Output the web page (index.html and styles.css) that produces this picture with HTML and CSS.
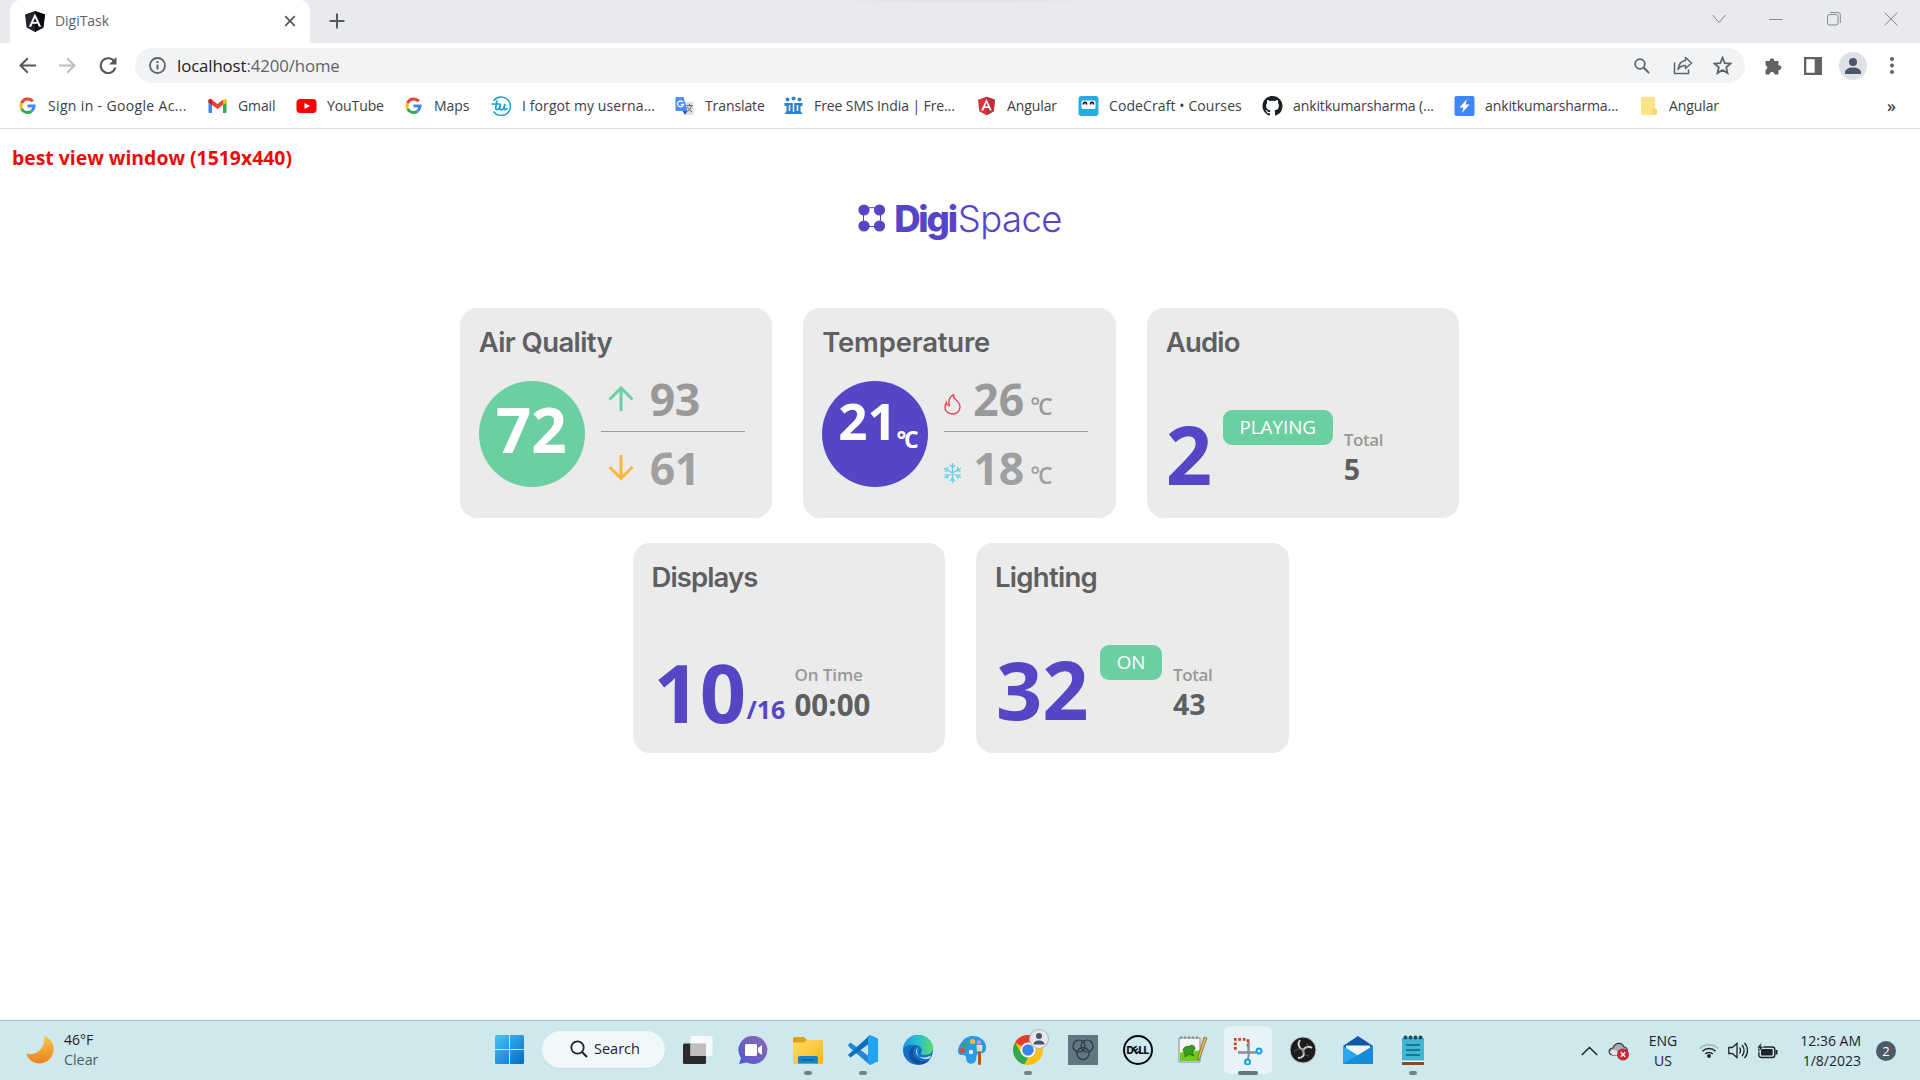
FILE: index.html
```html
<!DOCTYPE html>
<html lang="en">
<head>
<meta charset="utf-8">
<title>DigiTask</title>
<link rel="stylesheet" href="styles.css">
</head>
<body>
<div class="screen">
  <header class="tabstrip">
    <div class="tab">
      <svg class="tab-icon" width="20" height="21" viewBox="0 0 20 21"><path d="M10 0 20 3.5 18.4 16.5 10 21 1.6 16.5 0 3.5z" fill="#20242c"/><path d="M10 0 20 3.5 18.4 16.5 10 21z" fill="#06080d"/><path d="M10 2.5 3.8 15.8h2.4l1.2-3.1h5.2l1.2 3.1h2.4zM10 7l1.8 4H8.200z" fill="#fff"/></svg>
      <span class="tab-title">DigiTask</span>
      <svg width="12" height="12" viewBox="0 0 12 12"><path d="M1.200 1.200 10.800 10.800M10.800 1.200 1.200 10.800" stroke="#55595e" stroke-width="1.800"/></svg>
    </div>
    <svg class="newtab" width="16" height="16" viewBox="0 0 16 16"><path d="M8 .5v15M.5 8h15" stroke="#55595e" stroke-width="2"/></svg>
    <div class="winctl">
      <svg width="14" height="10" viewBox="0 0 14 10"><path d="M.5 1 7 8.500 13.500 1" fill="none" stroke="#85888d"/></svg>
      <svg width="14" height="10" viewBox="0 0 14 10"><path d="M0 5.500h13.500" stroke="#85888d"/></svg>
      <svg width="14" height="14" viewBox="0 0 14 14"><rect x=".5" y="2.500" width="10.500" height="10.500" rx="2" fill="none" stroke="#85888d"/><path d="M3 .5h8a2.300 2.300 0 0 1 2.300 2.300V11" fill="none" stroke="#85888d"/></svg>
      <svg width="14" height="14" viewBox="0 0 14 14"><path d="m.5.5 13 13M13.500.5l-13 13" stroke="#85888d"/></svg>
    </div>
  </header>

  <nav class="toolbar">
    <svg class="back" width="17" height="17" viewBox="0 0 17 17"><path d="M17 8.500H2M8.800 1.300 1.500 8.500l7.300 7.200" fill="none" stroke="#55595e" stroke-width="2"/></svg>
    <svg class="fwd" width="17" height="17" viewBox="0 0 17 17"><path d="M0 8.500h15M8.200 1.300l7.300 7.200-7.300 7.200" fill="none" stroke="#bbbec2" stroke-width="2"/></svg>
    <svg class="reload" width="18" height="18" viewBox="0 0 18 18"><path d="M15.600 5A7.400 7.400 0 1 0 16.300 10.500" fill="none" stroke="#55595e" stroke-width="2.100"/><path d="M17.500 0v7.500H10z" fill="#55595e"/></svg>
    <div class="omnibox">
      <svg width="17" height="17" viewBox="0 0 17 17"><circle cx="8.500" cy="8.500" r="7.500" fill="none" stroke="#5f6368" stroke-width="1.800"/><path d="M8.500 7.500v5M8.500 4v2" stroke="#5f6368" stroke-width="1.900"/></svg>
      <span class="url"><b>localhost</b>:4200/home</span>
      <svg class="ic-search" width="16" height="16" viewBox="0 0 16 16"><circle cx="6" cy="6" r="4.800" fill="none" stroke="#5f6368" stroke-width="1.800"/><path d="m9.500 9.500 5.500 5.500" stroke="#5f6368" stroke-width="2"/></svg>
      <svg class="ic-share" width="20" height="19" viewBox="0 0 20 19"><path d="M1.500 6.500v11h14v-4M12.500 1.500l6 5.500-6 5.500V9.500c-4 0-6 1.500-7.500 4 .5-5 3-8.500 7.500-9z" fill="none" stroke="#5f6368" stroke-width="1.500" stroke-linejoin="round"/></svg>
      <svg width="19" height="19" viewBox="0 0 20 20"><path d="m10 1.800 2.400 5.600 6.100.5-4.600 4 1.400 6-5.300-3.200-5.300 3.200 1.400-6-4.600-4 6.100-.5z" fill="none" stroke="#5f6368" stroke-width="1.900"/></svg>
    </div>
    <svg class="ic-ext" width="18" height="18" viewBox="0 0 18 18"><path d="M1.500 4h4.200a2.300 2.300 0 1 1 4.500 0H14.500v4.200a2.400 2.400 0 1 1 0 4.700V17.500H10.500a2.500 2.500 0 0 0-5 0h-4V13a2.500 2.500 0 0 0 0-4.800z" fill="#5f6368"/></svg>
    <svg class="ic-panel" width="18" height="18" viewBox="0 0 18 18"><path fill-rule="evenodd" d="M0 0h18v18H0zM2.300 2.300v13.400h8.400V2.300z" fill="#5f6368"/></svg>
    <svg class="ic-user" width="28" height="28" viewBox="0 0 28 28"><circle cx="14" cy="14" r="14" fill="#dee1e6"/><circle cx="14" cy="10" r="4" fill="#4a5568"/><path d="M6 22v-1.500c0-3 3.500-5 8-5s8 2 8 5V22z" fill="#4a5568"/></svg>
    <svg width="4" height="17" viewBox="0 0 4 17"><g fill="#5f6368"><circle cx="2" cy="2" r="2"/><circle cx="2" cy="8.500" r="2"/><circle cx="2" cy="15" r="2"/></g></svg>
  </nav>

  <nav class="bookmarks">
    <a class="wide"><svg viewBox="0 0 20 20"><use href="#g"/></svg><span>Sign in - Google Ac...</span></a>
    <a><svg viewBox="0 0 20 20"><path d="M1 3.500 4.500 6v11H2a1 1 0 0 1-1-1z" fill="#4285f4"/><path d="m15.500 6 3.500-2.500V16a1 1 0 0 1-1 1h-2.500z" fill="#34a853"/><path d="M1 5.500C1 3 3 2.500 4.500 3.700L10 8l5.500-4.300v5L10 13 1 6.500z" fill="#ea4335"/><path d="M1 5.500C1 3 3 2.500 4.500 3.700v5L1 6.500z" fill="#c5221f"/><path d="M19 5.500C19 3 17 2.500 15.500 3.700v5L19 6.500z" fill="#fbbc04"/></svg><span>Gmail</span></a>
    <a><svg viewBox="0 0 20 20"><rect y="3" width="20" height="14" rx="3.500" fill="#f00"/><path d="m8 7 5.500 3L8 13z" fill="#fff"/></svg><span>YouTube</span></a>
    <a><svg viewBox="0 0 20 20"><use href="#g"/></svg><span>Maps</span></a>
    <a class="mid"><svg viewBox="0 0 20 20"><path d="M2 5a9.300 9.300 0 1 1 0 10.500" fill="none" stroke="#1da1c9" stroke-width="1.400"/><path d="M0 8h9M5.500 4.500 4.200 12c-.2 2 2.300 2.300 3.500.3L9 8l-.8 4c0 2.500 3 2.300 4 0l1.300-4-1 4.500c0 1.500 2 1.500 3.500-.5" fill="none" stroke="#1da1c9" stroke-width="1.700"/></svg><span>I forgot my userna...</span></a>
    <a><svg viewBox="0 0 20 20"><path d="M9 6h9a1 1 0 0 1 1 1v11a1 1 0 0 1-1 1h-6z" fill="#dcdfe3"/><path d="M2 1h7l4 14H2a1 1 0 0 1-1-1V2a1 1 0 0 1 1-1z" fill="#4d8bf5"/><path d="m8 15 5 0-2.500 4z" fill="#3558b8"/><path d="M8.500 6A3 3 0 1 0 9 8.500H6.300" fill="none" stroke="#fff" stroke-width="1.300"/><path d="M12 9.500h6M15 8v1.500M17 9.500c-.5 3-2 4.500-4 6M13 11c1 2.500 3 4 4.500 5" fill="none" stroke="#667" /></svg><span>Translate</span></a>
    <a><svg viewBox="0 0 20 20"><path d="M1 7h18v3h-2v5l2 3H1l2-3v-5H1z" fill="#2f80cf"/><path d="M6 9v6M10 7v9M14 9v6" stroke="#e8f4ff" stroke-width="1.500"/><g fill="#2f80cf"><circle cx="4" cy="3.500" r="2"/><circle cx="10" cy="2.500" r="2"/><circle cx="16" cy="3.500" r="2"/></g></svg><span>Free SMS India | Fre...</span></a>
    <a><svg viewBox="0 0 20 20"><path d="m10 .8 8.500 3-1.300 11.400L10 19.200l-7.200-4L1.500 3.800z" fill="#dd3340"/><path d="m10 .8 8.500 3-1.300 11.400L10 19.200z" fill="#b7303b"/><path d="M10 3 4.700 14.500h2.100l1-2.600h4.400l1 2.600h2.100zm0 3.800 1.500 3.500h-3z" fill="#fff"/></svg><span>Angular</span></a>
    <a class="mid"><svg viewBox="0 0 20 20"><rect width="20" height="20" rx="3" fill="#29abe2"/><rect x="3" y="4.500" width="14" height="8.500" rx="1.500" fill="#fff"/><path d="M5 8.500c0-3 3-3 3 0M12 8.500c0-3 3-3 3 0" stroke="#111" stroke-width="1.700" fill="none"/></svg><span>CodeCraft • Courses</span></a>
    <a><svg viewBox="0 0 16 16"><path fill="#1b1f23" d="M8 0C3.580 0 0 3.580 0 8c0 3.540 2.290 6.530 5.470 7.590.4.070.55-.17.55-.38 0-.19-.01-.82-.01-1.490-2.010.37-2.530-.49-2.690-.94-.09-.23-.48-.94-.82-1.130-.28-.15-.68-.52-.01-.53.63-.01 1.080.58 1.230.82.72 1.210 1.870.87 2.330.66.070-.52.28-.87.51-1.070-1.780-.2-3.640-.89-3.640-3.950 0-.87.31-1.590.82-2.150-.08-.2-.36-1.020.08-2.120 0 0 .67-.21 2.200.82.64-.18 1.320-.27 2-.27s1.360.09 2 .27c1.530-1.040 2.200-.82 2.200-.82.44 1.100.16 1.920.08 2.120.51.56.82 1.270.82 2.150 0 3.070-1.870 3.750-3.650 3.950.29.25.54.73.54 1.480 0 1.070-.01 1.930-.01 2.200 0 .21.15.46.55.38A8.010 8.010 0 0 0 16 8c0-4.420-3.580-8-8-8z"/></svg><span>ankitkumarsharma (...</span></a>
    <a><svg viewBox="0 0 20 20"><rect width="20" height="20" rx="2" fill="#4285f4"/><path d="M12.500 3 5 11.500h4L7.500 17 15 8.500h-4z" fill="#fff"/></svg><span>ankitkumarsharma...</span></a>
    <a><svg viewBox="0 0 20 20"><rect x="2.500" y="1" width="14" height="18" rx="1.500" fill="#fde488"/><path d="M14 12.500h2.500a2 2 0 0 1 2 2V17a2 2 0 0 1-2 2h-2.500z" fill="#f7d862"/></svg><span>Angular</span></a>
    <b class="more">»</b>
  </nav>

  <main class="page">
    <p class="notice">best view window (1519x440)</p>
    <div class="logo">
      <svg width="28" height="28" viewBox="0 0 28 28"><path d="M5.500 5.500C10 3 18 3 22.500 5.500v17H5.500z" fill="none" stroke="#5546c6" stroke-width="1"/><g fill="#5546c6"><circle cx="6" cy="6" r="5.600"/><circle cx="21.500" cy="6" r="5.600"/><circle cx="6" cy="22" r="5.600"/><circle cx="21.500" cy="22" r="5.600"/></g></svg>
      <span class="logo-a">Digi</span><span class="logo-b">Space</span>
    </div>
    <section class="row first">
      <article class="card">
        <h2 class="t-air">Air Quality</h2>
        <div class="gauge">
          <div class="dial green"><span class="dial-num">72</span></div>
          <div class="reads">
            <div class="read"><svg width="26" height="26" viewBox="0 0 26 26"><path d="M13 25V2M1.500 13.500 13 2l11.500 11.500" fill="none" stroke="#6bcfa2" stroke-width="3"/></svg><span>93</span></div>
            <div class="read low"><svg width="26" height="26" viewBox="0 0 26 26"><path d="M13 0v23M1.500 12 13 23.500 24.500 12" fill="none" stroke="#fbb73c" stroke-width="3"/></svg><span>61</span></div>
          </div>
        </div>
      </article>
      <article class="card">
        <h2 class="t-temp">Temperature</h2>
        <div class="gauge">
          <div class="dial violet"><span class="dial-temp">21</span><span class="deg">°C</span></div>
          <div class="reads temp">
            <div class="read"><svg width="17" height="21" viewBox="0 0 17 21"><path d="M8.500 1C10 0 9.500 1 9.800 3c.5 2.500 6.200 4.500 6.200 10 0 4-3 7-7.500 7S1 17 1 13.500c0-2 .5-3.500 1.500-5C3 11 4 12 5.500 11.500 4 7 5.500 2.500 9.500.8" fill="none" stroke="#ee4358" stroke-width="1.400"/></svg><span>26</span><i>°C</i></div>
            <div class="read low"><svg width="17" height="20" viewBox="0 0 17 20"><path d="M8.500 0v20M0 5.200l17 9.600M17 5.200 0 14.800M6 2l2.500 2.500L11 2M6 18l2.500-2.500L11 18M.5 8.500 4 7.500 3 4M16.500 8.500 13 7.500 14 4M.5 11.500l3.500 1L3 16M16.500 11.500l-3.500 1 1 3.500" fill="none" stroke="#5fd3df" stroke-width="1.300"/></svg><span>18</span><i>°C</i></div>
          </div>
        </div>
      </article>
      <article class="card">
        <h2 class="t-audio">Audio</h2>
        <div class="stat">
          <strong class="num one">2</strong>
          <span class="badge playing">PLAYING</span>
          <div class="meta"><span>Total</span><b>5</b></div>
        </div>
      </article>
    </section>
    <section class="row second">
      <article class="card">
        <h2 class="t-disp">Displays</h2>
        <div class="stat">
          <strong class="num disp">10</strong><em class="of">/16</em>
          <div class="meta time"><span>On Time</span><b>00:00</b></div>
        </div>
      </article>
      <article class="card">
        <h2 class="t-light">Lighting</h2>
        <div class="stat">
          <strong class="num two">32</strong>
          <span class="badge on">ON</span>
          <div class="meta"><span>Total</span><b>43</b></div>
        </div>
      </article>
    </section>
  </main>

  <footer class="taskbar">
    <div class="weather">
      <svg width="28" height="29" viewBox="0 0 28 29"><path d="M18 .5c7 3 10.500 9 9.500 15.500C26.500 23.500 20 28.500 13.500 28.500 7.500 28.500 2.500 25 0 18.500c5.500 1.500 11 .5 15-4.500 3-4 4-8.500 3-13.500z" fill="url(#moon)"/></svg>
      <div class="wx"><span>46°F</span><small>Clear</small></div>
    </div>
    <div class="apps">
      <div class="app start"><svg width="29" height="29" viewBox="0 0 29 29"><path d="M1.500 0H14v14H0V1.500A1.500 1.500 0 0 1 1.500 0zM15 0h12.500A1.500 1.500 0 0 1 29 1.500V14H15zM0 15h14v14H1.500A1.500 1.500 0 0 1 0 27.500zM15 15h14v12.500a1.500 1.500 0 0 1-1.500 1.500H15z" fill="url(#win)"/></svg></div>
      <div class="search"><svg width="18" height="18" viewBox="0 0 18 18"><circle cx="7.500" cy="7.500" r="6.200" fill="none" stroke="#1c2428" stroke-width="1.800"/><path d="m12 12 5 5" stroke="#1c2428" stroke-width="2"/></svg><span>Search</span></div>
      <div class="app"><svg width="30" height="30" viewBox="0 0 30 30"><rect y="8.500" width="23" height="20.500" rx="1.500" fill="#2b2b2b"/><rect x="7.500" y="1" width="22" height="20" rx="1" fill="#fafafa" opacity=".95"/><path d="M7.500 8.500H23V21H7.500z" fill="#bfbfbf"/></svg></div>
      <div class="app"><svg width="30" height="30" viewBox="0 0 30 30"><path d="M15 1A14 14 0 1 1 9 27.500L1 29l2-6A14 14 0 0 1 15 1z" fill="url(#chat)"/><rect x="7" y="9" width="12" height="12" rx="1.500" fill="#fff"/><path d="m20 13 4-3v10l-4-3z" fill="#fff"/></svg></div>
      <div class="app run"><svg width="30" height="30" viewBox="0 0 30 30"><path d="M0 3.500A1.500 1.500 0 0 1 1.500 2H11l3 3h14.500A1.500 1.500 0 0 1 30 6.500V9H0z" fill="#e0a012"/><path d="M0 7.500h11L14 5h14.500A1.500 1.500 0 0 1 30 6.500v21a1.500 1.500 0 0 1-1.500 1.500h-27A1.500 1.500 0 0 1 0 27.500z" fill="url(#fold)"/><path d="M5 28.500V23a2 2 0 0 1 2-2h16a2 2 0 0 1 2 2v5.500z" fill="#1583cf"/><path d="M9 24.700h12" stroke="#0a5a9c" stroke-width="1.400"/></svg></div>
      <div class="app run"><svg width="30" height="30" viewBox="0 0 30 30"><path d="M0 10 2.500 7.500 22 22v8L1 12z" fill="#1a8bd4"/><path d="M0 20 22 0v8L2.500 22.500z" fill="#0b6fb8"/><path d="m22 0 8 3.500v23L22 30l-2-3V3z" fill="#24a3ef"/></svg></div>
      <div class="app"><svg width="30" height="30" viewBox="0 0 30 30"><circle cx="15" cy="15" r="15" fill="#1372c5"/><path d="M.3 13C2 4 9 0 15 0c9 0 15 6 15 13 0 5-4 7-8 7-3 0-4.500-1-4-2 2-3 .5-7-5-8C8 9 3 10 .3 13z" fill="url(#edge)"/><path d="M13 11c-4 3-4 9 0 12.500 4 3.500 10 3.500 14 1C22 31 12 31 8 25 4 19 7 12 13 11z" fill="#154f9e"/><path d="M15 12c-3 3-2.500 7.500 1.500 9.800 4 1.500 8 .5 11.500-1.300l-1 2.500c-5 2.500-10 .5-12-3-1.500-3-1-6 0-8z" fill="#cee8ee"/></svg></div>
      <div class="app"><svg width="30" height="30" viewBox="0 0 30 30"><path d="M15 1c9 0 14 7 13 13-1 5-5 4-8 5s0 6-4 9c-5 2-8-1-8-5 0-3-2-3-5-3-5-1-3-8 0-12 3-5 7-7 12-7z" fill="#2a9be3"/><circle cx="14.500" cy="6.500" r="2.600" fill="#f6b93b"/><circle cx="7" cy="9.500" r="2.600" fill="#3ba55d"/><circle cx="4.500" cy="15.500" r="2.600" fill="#e04f39"/><circle cx="21" cy="7.500" r="2.200" fill="#bf9ae0"/><circle cx="13" cy="17" r="2.200" fill="#d6f0fb"/><path d="M18.500 10h6l-.5 6.500h-5z" fill="#e9d9bd"/><path d="M20 16.500h3v12a1.500 1.500 0 0 1-3 0z" fill="#a65a24"/></svg></div>
      <div class="app run"><svg width="30" height="30" viewBox="0 0 30 30"><circle cx="15" cy="15" r="15" fill="#fbc116"/><path d="M15 15 2 7.500A15 15 0 0 1 28 7.500H15z" fill="#e33b2e"/><path d="M2 7.500 8.500 19l6.500 3-3.500 7.500A15 15 0 0 1 2 7.500z" fill="#2da94f"/><circle cx="15" cy="15" r="7.500" fill="#fff"/><circle cx="15" cy="15" r="5.800" fill="#3f82ee"/></svg><svg class="who" width="20" height="20" viewBox="0 0 20 20"><circle cx="10" cy="10" r="9.500" fill="#e6e8ec" stroke="#aab2ba"/><circle cx="10" cy="7" r="3" fill="#4a5568"/><path d="M4.500 15.500c0-5.500 11-5.500 11 0z" fill="#4a5568"/></svg></div>
      <div class="app"><svg width="30" height="30" viewBox="0 0 30 30"><path d="M0 0h30v30H0z" fill="#627680"/><g fill="none" stroke="#2c3940" stroke-width="1.200"><circle cx="11" cy="11" r="6"/><circle cx="19" cy="11" r="6"/><circle cx="15" cy="18.500" r="6"/></g></svg></div>
      <div class="app"><svg width="30" height="30" viewBox="0 0 30 30"><circle cx="15" cy="15" r="14" fill="none" stroke="#0b0b0b" stroke-width="2"/></svg><span class="dell">D<i>E</i>LL</span></div>
      <div class="app"><svg width="30" height="30" viewBox="0 0 30 30"><path d="M1 3h21v24H1z" fill="#f6f6f6" stroke="#8a8a8a"/><path d="M2 18c7-4 14-1 20-3v11H2z" fill="#6ccb1e"/><path d="M5 15c2-5 5-3 7-4 2-2 5 0 5 3l-3 3 2 4-5-2-4 3 0-4z" fill="#3d9b25" stroke="#1f5f17" stroke-width=".8"/><path d="m26 2 3 1-7 20-2 2v-3z" fill="#e7b552" stroke="#7a5a2a" stroke-width=".7"/><path d="M3 1v3M7 1v3M11 1v3M15 1v3M19 1v3" stroke="#777"/></svg></div>
      <div class="app active"><svg width="30" height="30" viewBox="0 0 30 30"><path d="M12.500 4.300H2.300v11.500M15 4.300v9" fill="none" stroke="#cf3a17" stroke-width="2.700" stroke-dasharray="2.700 1.800"/><path d="M15.500 7v11M5 17.500h18" stroke="#8b8f93" stroke-width="2.500"/><path d="m16 18-1 6" stroke="#8b8f93" stroke-width="2"/><g fill="none" stroke="#1a9de0" stroke-width="1.900"><circle cx="26" cy="16" r="2.500"/><circle cx="14.500" cy="27" r="2.500"/></g></svg></div>
      <div class="app"><svg width="30" height="30" viewBox="0 0 30 30"><circle cx="15" cy="15" r="13" fill="#1d1b1d" stroke="#bcc5c9"/><path d="M12 5c-3 4-1 8 3 10M24 13c-4-3-8 0-9 3M10 23c5 0 7-3 5-7" fill="none" stroke="#d5d5d5" stroke-width="2"/><path d="M15 15c4-1 5-4 4-7M15 15c-3-2-7-1-9 2M15 15c0 4 3 6 6 6" fill="none" stroke="#6a6a6a" stroke-width=".8"/></svg></div>
      <div class="app"><svg width="30" height="30" viewBox="0 0 30 30"><path d="M0 11 15 1l15 10-9 9H9z" fill="#0c59a8"/><path d="M3 10.500h24V14l-12 7L3 14z" fill="#f3f3f3"/><path d="M0 11l15 9.500L30 11v18H0z" fill="#2aa8ee"/><path d="M0 29 30 11v18z" fill="#168bd9"/></svg></div>
      <div class="app run"><svg width="30" height="30" viewBox="0 0 30 30"><rect x="4" y="3" width="22" height="23" fill="#3fb6d3"/><path d="M4 27h22v3H4z" fill="#8b4a1e"/><path d="M4 25.500h22V27H4z" fill="#f4f4f4"/><path d="M8 10h14M8 15h14M8 20h14" stroke="#0e6480" stroke-width="1.700"/><g fill="#145066"><circle cx="7.500" cy="2.500" r="2"/><circle cx="12.500" cy="2.500" r="2"/><circle cx="17.500" cy="2.500" r="2"/><circle cx="22.500" cy="2.500" r="2"/></g></svg></div>
    </div>
    <div class="tray">
      <svg width="17" height="10" viewBox="0 0 17 10"><path d="m.8 9 7.700-7.500L16.200 9" fill="none" stroke="#1c2428" stroke-width="1.500"/></svg>
      <svg class="cloud" width="22" height="20" viewBox="0 0 22 20"><path d="M4.500 14C-.5 13 .5 7 5 7 7 1 14 1 16 6c4 0 5 8 0 8z" fill="#a8aaac" stroke="#33383b" stroke-width="1.200"/><path d="M2 12c1-4 5-4 8-1l-1 3H5z" fill="#e4e6e7"/><circle cx="15" cy="13.500" r="6" fill="#cf2433"/><path d="m12.800 11.300 4.400 4.400M17.200 11.300l-4.400 4.400" stroke="#fff" stroke-width="1.500"/></svg>
      <div class="lang">ENG<br>US</div>
      <svg width="20" height="15" viewBox="0 0 20 15"><path d="M.8 5.500a13 13 0 0 1 18.400 0" fill="none" stroke="#a1b4ba" stroke-width="1.400"/><path d="M3.500 8.300a9.200 9.200 0 0 1 13 0M6.200 11a5.300 5.300 0 0 1 7.600 0" fill="none" stroke="#1c2428" stroke-width="1.500"/><circle cx="10" cy="13" r="1.900" fill="#1c2428"/></svg>
      <svg class="vol" width="20" height="17" viewBox="0 0 20 17"><path d="M.8 5.500h3.500L9 1.500v14l-4.700-4H.8z" fill="none" stroke="#1c2428" stroke-width="1.300"/><path d="M11.500 5.500c1.300 1.500 1.300 4.500 0 6M14 3c2.800 3 2.800 8 0 11M16.500 1c4 4 4 11 0 15" fill="none" stroke="#1c2428" stroke-width="1.300"/></svg>
      <svg class="bat" width="21" height="17" viewBox="0 0 21 17"><rect x="1.800" y="5" width="16" height="10.500" rx="2.500" fill="none" stroke="#1c2428" stroke-width="1.400"/><rect x="4" y="7" width="11.700" height="6.500" rx="1" fill="#1c2428"/><path d="M18.500 8h2v4.500h-2z" fill="#1c2428"/><path d="M4.500 0 0 6h2.500L1.500 10.500 6.500 4.500H4z" fill="#1c2428" stroke="#cee8ee" stroke-width=".6"/></svg>
      <div class="clock">12:36 AM<br><span>1/8/2023</span></div>
      <div class="count">2</div>
    </div>
  </footer>
</div>
<svg class="defs" width="0" height="0">
  <defs>
    <g id="g"><path d="M15.300 5.300A6.600 6.600 0 0 0 4.100 7.200" fill="none" stroke="#ea4335" stroke-width="3"/><path d="M4.100 7.200a6.600 6.600 0 0 0 0 5.600" fill="none" stroke="#fbbc05" stroke-width="3"/><path d="M4.100 12.800a6.600 6.600 0 0 0 9.900 2.400" fill="none" stroke="#34a853" stroke-width="3"/><path d="M10 10h6.600a6.600 6.600 0 0 1-2.500 5.100" fill="none" stroke="#4285f4" stroke-width="3"/></g>
    <linearGradient id="moon" x2="0" y2="1"><stop stop-color="#f8c944"/><stop offset="1" stop-color="#ec8021"/></linearGradient>
    <linearGradient id="win" x2="1" y2="1"><stop stop-color="#48c5f7"/><stop offset="1" stop-color="#0568c9"/></linearGradient>
    <linearGradient id="chat" x1="1" x2="0" y2="1"><stop stop-color="#8c6bb0"/><stop offset="1" stop-color="#5059cf"/></linearGradient>
    <linearGradient id="fold" x2="1" y2="1"><stop stop-color="#ffdc62"/><stop offset="1" stop-color="#f5b91f"/></linearGradient>
    <linearGradient id="edge" x2="1"><stop stop-color="#1b9be0"/><stop offset=".5" stop-color="#2cc0d0"/><stop offset="1" stop-color="#5bdc63"/></linearGradient>
  </defs>
</svg>
</body>
</html>
```
FILE: styles.css
```css
* { box-sizing: border-box; }
body { margin: 0; font-family: "Open Sans", "Noto Sans", sans-serif; background: #fff; }
svg { display: block; flex: none; }
.defs { position: absolute; }
.screen { width: 1920px; height: 1080px; display: flex; flex-direction: column; overflow: hidden; white-space: nowrap; }

.tabstrip { height: 43px; flex: none; display: flex; background: radial-gradient(ellipse 140px 4px at 963px 0, #dddfe3, #e8eaed); padding-left: 10px; }
.tab { width: 300px; height: 43px; background: #fff; border-radius: 10px 10px 0 0; display: flex; align-items: center; padding: 0 14px 1px 15px; }
.tab-title { font-size: 14px; letter-spacing: -.05px; color: #5f6368; margin: -2px 0 0 10px; flex: 1; }
.newtab { margin: 13px 0 0 19px; }
.winctl { margin-left: auto; height: 37px; display: flex; align-items: center; gap: 43.500px; padding-right: 22px; }

.toolbar { height: 45px; flex: none; display: flex; align-items: center; padding: 0 26px 0 19px; }
.fwd { margin-left: 23px; }
.reload { margin-left: 23px; }
.omnibox { width: 1610px; height: 35px; margin-left: 18px; border-radius: 18px; background: #f1f3f4; display: flex; align-items: center; padding: 0 13px 0 14px; }
.url { font-size: 16.800px; letter-spacing: -.1px; color: #5f6368; margin-left: 11px; flex: 1; }
.url b { font-weight: 400; color: #202124; }
.ic-share { margin: 0 20px 0 23px; }
.ic-ext { margin-left: 19px; }
.ic-panel { margin-left: 22px; }
.ic-user { margin: 0 23px 0 17px; }

.bookmarks { height: 41px; flex: none; border-bottom: 1px solid #d9dbde; display: grid; grid-template-columns: 190px 89px 107px 88px 183px 109px 193px 102px 184px 192px 184px 1fr 16px; padding: 0 17px 5px 17px; align-items: center; font-size: 14px; letter-spacing: -.1px; color: #3c4043; }
.bookmarks a { display: flex; align-items: center; gap: 10px; }
.bookmarks .wide { letter-spacing: .35px; }
.bookmarks .mid { letter-spacing: .1px; }
.bookmarks svg { width: 21px; height: 20px; }
.more { font-size: 16px; font-weight: 600; }

.page { flex: 1; min-height: 0; }
.notice { margin: 0; padding: 15px 0 0 12px; height: 70px; font-size: 19.400px; font-weight: 700; line-height: 28px; color: #ec0b0b; }
.logo { height: 109px; display: flex; justify-content: center; align-items: flex-start; padding-top: 2px; color: #5546c6; font-family: Inter, sans-serif; font-size: 36.500px; line-height: 36px; }
.logo svg { margin: 3px 8px 0 0; }
.logo-a { font-weight: 800; letter-spacing: -2.200px; margin-right: 2px; }
.logo-b { font-weight: 300; letter-spacing: -.6px; }
.row { display: flex; justify-content: center; gap: 31px; margin-bottom: 25px; }
.first { padding-right: 1px; }
.second { padding-left: 1px; }
.card { width: 312.500px; height: 210px; border-radius: 17px; background: #ebebeb; padding: 19px 0 0 19px; }
.card h2 { margin: 0; font: 600 27.500px/30px Inter, sans-serif; color: #5d5f61; }
.card .t-air { letter-spacing: -.6px; }
.card .t-temp { letter-spacing: -.2px; }
.card .t-audio { letter-spacing: -.8px; }
.card .t-disp { letter-spacing: -.9px; }
.card .t-light { letter-spacing: -.7px; }

.gauge { display: flex; margin-top: 15px; }
.dial { width: 106px; height: 106px; border-radius: 50%; margin-top: 9px; color: #fff; font-weight: 700; }
.green { background: #6bcfa2; }
.violet { background: #5546c6; display: flex; }
.dial-num { display: block; font-size: 62px; line-height: 97px; padding-left: 17px; }
.dial-temp { font-size: 51px; line-height: 79px; margin-left: 16px; }
.deg { font-size: 23px; line-height: 117px; font-weight: 700; letter-spacing: -2.500px; }
.reads { width: 144px; margin-left: 16px; }
.read { height: 59px; display: flex; font-size: 44.500px; line-height: 53px; font-weight: 700; color: #999; }
.read span { letter-spacing: -.5px; }
.read svg { margin: 14px 16px 0 7px; }
.low { border-top: 1px solid #9b9b9b; height: 60px; padding-top: 9px; color: #a0a0a0; }
.temp .read svg { margin: 22px 12px 0 0; }
.temp .read span { letter-spacing: 0; }
.read i { font: 600 23px/69px "Open Sans", sans-serif; letter-spacing: -2px; margin-left: 6px; }

.stat { display: flex; align-items: flex-start; margin-top: 53px; }
.num { font-size: 81px; line-height: 60px; color: #5546c6; margin-top: 14px; }
.one { width: 57px; }
.two { width: 105px; padding-left: 1px; }
.disp { width: 92px; margin: 17px 0 0 2px; }
.of { font: 700 25px/30px "Open Sans", sans-serif; color: #5546c6; margin: 49px 0 0 1px; width: 37px; }
.badge { height: 35px; border-radius: 9px; background: #6bcfa2; color: #fff; font-size: 18.800px; line-height: 35px; text-align: center; }
.playing { width: 110px; }
.on { width: 62px; }
.meta { margin: 18px 0 0 11px; display: flex; flex-direction: column; }
.meta span { font-size: 17px; line-height: 24px; font-weight: 600; letter-spacing: -.4px; color: #999; }
.meta b { font-size: 28.500px; line-height: 34px; color: #5d5f61; }
.time b { margin-top: 1px; font-size: 29.500px; }
.time span { letter-spacing: -.1px; }

.taskbar { height: 60px; flex: none; border-top: 1px solid #a8b6bb; background: #cee8ee; display: flex; color: #1c2428; font-size: 14px; line-height: 20px; }
.weather { width: 482px; display: flex; padding: 14px 0 0 26px; gap: 10px; }
.wx { display: flex; flex-direction: column; margin-top: -5px; }
.wx small { font-size: 14.300px; color: #4d5c62; }
.apps { display: flex; align-items: center; height: 57px; }
.app { width: 55px; height: 57px; display: flex; align-items: center; justify-content: center; position: relative; }
.start { margin-right: 5px; }
.search { width: 123px; height: 38px; border-radius: 19px; background: #f0f8fa; display: flex; align-items: center; padding-left: 28px; gap: 6px; margin-right: 5px; border-bottom: 1px solid #c3d9df; font-size: 14.500px; }
.run::after, .active::after { content: ""; position: absolute; bottom: 3px; width: 8px; height: 4px; border-radius: 2px; background: #71828a; }
.active::before { content: ""; position: absolute; inset: 5px 3px 4px 4px; background: #e6f3f7; border-radius: 5px; }
.active svg { position: relative; }
.active::after { width: 20px; background: #627680; }
.who { position: absolute; left: 29px; top: 8px; }
.dell { position: absolute; font: 800 10px/12px Inter, sans-serif; letter-spacing: -.6px; color: #0b0b0b; }
.dell i { display: inline-block; font-style: normal; transform: rotate(-35deg); }
.tray { margin-left: auto; display: flex; align-items: center; padding-right: 24px; }
.cloud { margin-left: 10px; }
.lang { width: 48px; margin: 0 12px 0 9px; text-align: center; }
.vol, .bat { margin-left: 9px; }
.clock { width: 83px; text-align: right; line-height: 20px; }
.count { width: 20px; height: 20px; margin-left: 15px; border-radius: 50%; background: #4c5c66; color: #fff; font-size: 13px; text-align: center; }
```
